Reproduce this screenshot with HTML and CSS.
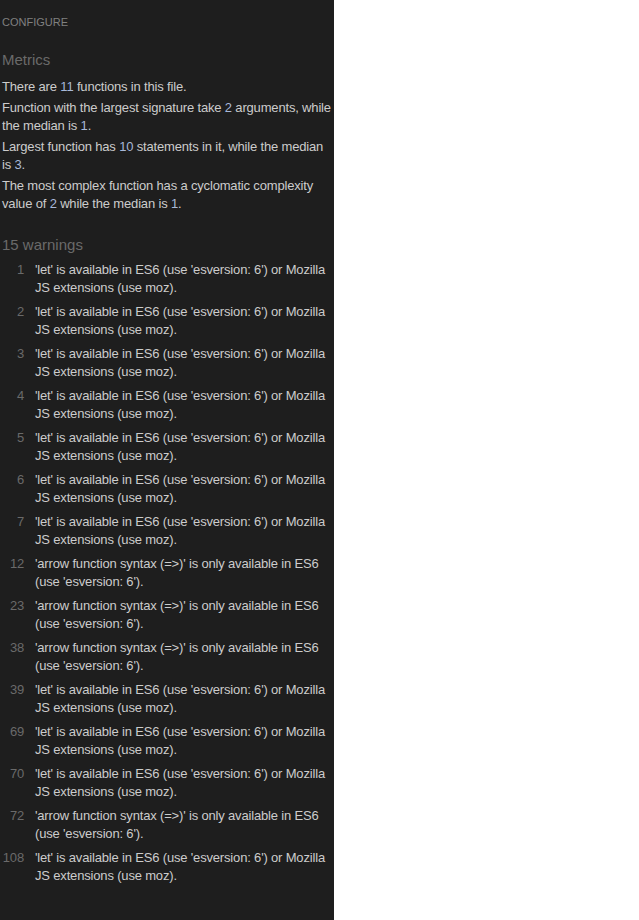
FILE: index.html
```html
<!DOCTYPE html>
<html>
<head>
<meta charset="utf-8">
<link rel="stylesheet" href="styles.css">
</head>
<body>
<div class="panel">
  <div class="configure">CONFIGURE</div>
  <h2 class="heading">Metrics</h2>
  <p class="metric">There are <span class="num">11</span> functions in this file.</p>
  <p class="metric">Function with the largest signature take <span class="num">2</span> arguments, while the median is <span class="num">1</span>.</p>
  <p class="metric">Largest function has <span class="num">10</span> statements in it, while the median is <span class="num">3</span>.</p>
  <p class="metric">The most complex function has a cyclomatic complexity value of <span class="num">2</span> while the median is <span class="num">1</span>.</p>
  <h2 class="heading warnings-heading">15 warnings</h2>
  <ul class="warnings">
    <li class="warning"><span class="line">1</span><span class="msg">'let' is available in ES6 (use 'esversion: 6') or Mozilla JS extensions (use moz).</span></li>
    <li class="warning"><span class="line">2</span><span class="msg">'let' is available in ES6 (use 'esversion: 6') or Mozilla JS extensions (use moz).</span></li>
    <li class="warning"><span class="line">3</span><span class="msg">'let' is available in ES6 (use 'esversion: 6') or Mozilla JS extensions (use moz).</span></li>
    <li class="warning"><span class="line">4</span><span class="msg">'let' is available in ES6 (use 'esversion: 6') or Mozilla JS extensions (use moz).</span></li>
    <li class="warning"><span class="line">5</span><span class="msg">'let' is available in ES6 (use 'esversion: 6') or Mozilla JS extensions (use moz).</span></li>
    <li class="warning"><span class="line">6</span><span class="msg">'let' is available in ES6 (use 'esversion: 6') or Mozilla JS extensions (use moz).</span></li>
    <li class="warning"><span class="line">7</span><span class="msg">'let' is available in ES6 (use 'esversion: 6') or Mozilla JS extensions (use moz).</span></li>
    <li class="warning"><span class="line">12</span><span class="msg">'arrow function syntax (=&gt;)' is only available in ES6 (use 'esversion: 6').</span></li>
    <li class="warning"><span class="line">23</span><span class="msg">'arrow function syntax (=&gt;)' is only available in ES6 (use 'esversion: 6').</span></li>
    <li class="warning"><span class="line">38</span><span class="msg">'arrow function syntax (=&gt;)' is only available in ES6 (use 'esversion: 6').</span></li>
    <li class="warning"><span class="line">39</span><span class="msg">'let' is available in ES6 (use 'esversion: 6') or Mozilla JS extensions (use moz).</span></li>
    <li class="warning"><span class="line">69</span><span class="msg">'let' is available in ES6 (use 'esversion: 6') or Mozilla JS extensions (use moz).</span></li>
    <li class="warning"><span class="line">70</span><span class="msg">'let' is available in ES6 (use 'esversion: 6') or Mozilla JS extensions (use moz).</span></li>
    <li class="warning"><span class="line">72</span><span class="msg">'arrow function syntax (=&gt;)' is only available in ES6 (use 'esversion: 6').</span></li>
    <li class="warning"><span class="line">108</span><span class="msg">'let' is available in ES6 (use 'esversion: 6') or Mozilla JS extensions (use moz).</span></li>
  </ul>
</div>
</body>
</html>
```
FILE: styles.css
```css
html, body {
  margin: 0;
  padding: 0;
  background: #ffffff;
}
body {
  font-family: "Liberation Sans", Arial, sans-serif;
}
.panel {
  width: 334px;
  height: 920px;
  box-sizing: border-box;
  background: #1e1e1e;
  padding: 15px 0 0 2px;
  color: #cccccc;
  font-size: 13px;
  line-height: 18px;
  letter-spacing: -0.17px;
  overflow: hidden;
}
.configure {
  font-size: 11px;
  line-height: 14px;
  color: #808080;
  letter-spacing: 0;
}
.heading {
  font-size: 15px;
  font-weight: normal;
  color: #6a6a6a;
  line-height: 18px;
  letter-spacing: 0;
  margin: 22px 0 9px 0;
}
.metric {
  margin: 0 0 3px 0;
}
.num {
  color: #a8b8d8;
}
.warnings-heading {
  margin: 23px 0 7px 0;
}
.warnings {
  list-style: none;
  margin: 0;
  padding: 0;
}
.warning {
  display: flex;
  margin-bottom: 6px;
}
.line {
  width: 22px;
  flex: none;
  text-align: right;
  color: #6a6a6a;
  margin-right: 11px;
}
.msg {
  flex: 1;
  padding-right: 4px;
}
```
